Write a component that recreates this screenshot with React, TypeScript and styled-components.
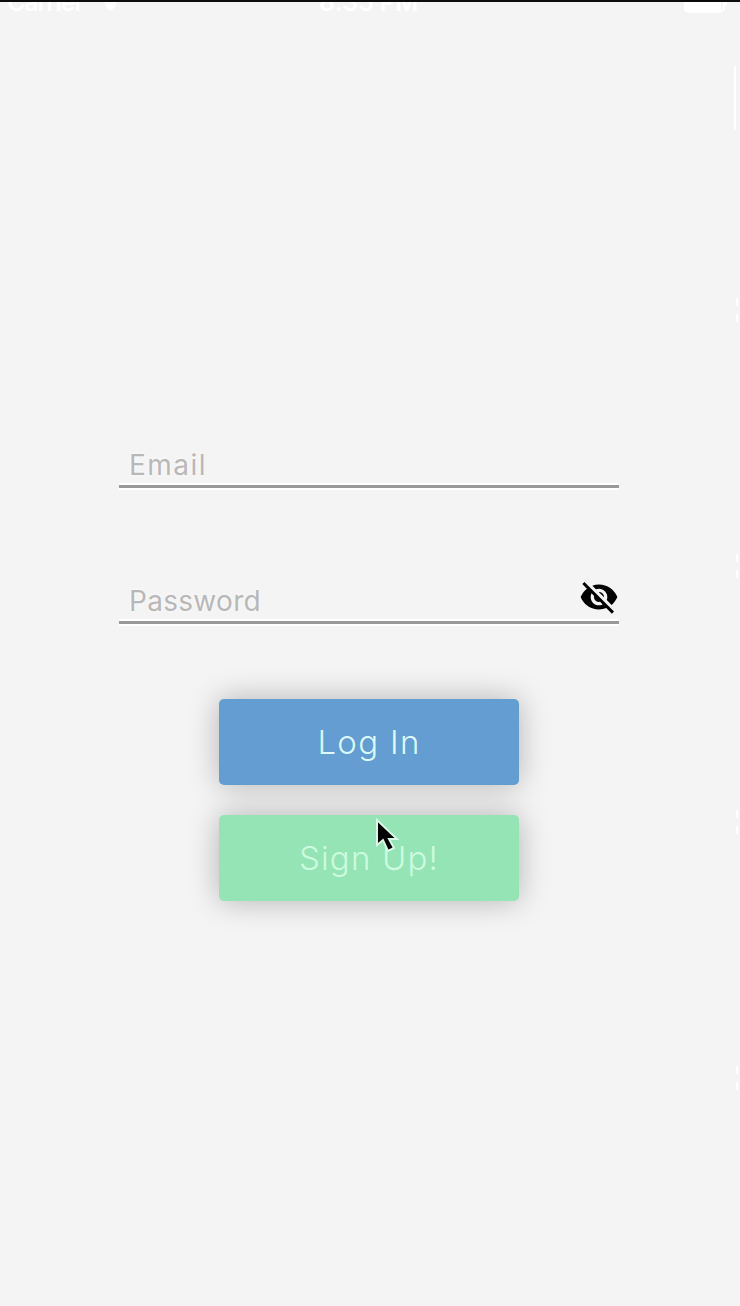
import React from "react";
import styled, { createGlobalStyle } from "styled-components";

const GlobalStyle = createGlobalStyle`
  * { box-sizing: border-box; }
  body { margin: 0; background: #f4f4f4; }
`;

const Screen = styled.main`
  position: relative;
  width: 740px;
  height: 1306px;
  display: flex;
  flex-direction: column;
  align-items: center;
  overflow: hidden;
  background: #f4f4f4;
  border-top: 2px solid #0c0c0c;
  font-family: Inter, "Liberation Sans", sans-serif;
`;

const StatusBar = styled.header`
  width: 100%;
  height: 26px;
  margin-top: -12px;
  padding: 0 13px 0 7px;
  display: grid;
  grid-template-columns: 1fr auto 1fr;
  align-items: start;
  color: #fff;
  font-size: 25px;
  font-weight: 600;
  line-height: 24px;
`;

const StatusGroup = styled.div<{ $end?: boolean }>`
  height: 24px;
  display: flex;
  align-items: center;
  gap: 17px;
  justify-content: ${(p) => (p.$end ? "flex-end" : "flex-start")};
`;

const Carrier = styled.span`
  letter-spacing: -1.2px;
`;

const Clock = styled.span`
  height: 24px;
  padding-left: 3px;
  letter-spacing: -0.3px;
`;

const Form = styled.form`
  width: 500px;
  margin: 426px 2px 0 0;
  display: flex;
  flex-direction: column;
  align-items: center;
`;

const Field = styled.label`
  width: 500px;
  height: 46px;
  margin-bottom: 90px;
  padding: 0 0 0 10px;
  display: flex;
  align-items: flex-start;
  justify-content: space-between;
  border-bottom: 3px solid #999;
  box-shadow: 0 2px 0 #fff, inset 0 -2px 0 #fff;
`;

const Placeholder = styled.span<{ $spacing: number }>`
  font-size: 28px;
  font-weight: 400;
  line-height: 47px;
  letter-spacing: ${(p) => p.$spacing}px;
  color: #b8b8b8;
  text-shadow: 0 0 3px #fff;
`;

const Visibility = styled.svg`
  width: 40px;
  height: 40px;
  margin: -1px 0 0 auto;
  overflow: visible;
`;

const Actions = styled.div`
  margin-top: -15px;
  display: flex;
  flex-direction: column;
  gap: 30px;
`;

const Button = styled.button<{ $tone: string; $ink: string; $spacing: number }>`
  width: 300px;
  height: 86px;
  padding: 0 0 1px;
  border: 0;
  border-radius: 5px;
  background: ${(p) => p.$tone};
  color: ${(p) => p.$ink};
  font-family: inherit;
  font-size: 33px;
  font-weight: 300;
  line-height: 40px;
  letter-spacing: ${(p) => p.$spacing}px;
  box-shadow: 0 0 30px rgba(0, 0, 0, 0.27);
`;

const Pointer = styled.svg`
  position: absolute;
  left: 374px;
  top: 814px;
  width: 28px;
  height: 40px;
`;

const EdgeMark = styled.div<{ $top: number; $height: number; $right?: number }>`
  position: absolute;
  right: ${(p) => p.$right ?? 2}px;
  top: ${(p) => p.$top}px;
  width: 2px;
  height: ${(p) => p.$height}px;
  background: #fff;
`;

const edgeTicks = [296, 312, 552, 568, 808, 824, 1064, 1080];

export default function App() {
  return (
    <>
      <GlobalStyle />
      <Screen>
        <StatusBar>
          <StatusGroup>
            <Carrier>Carrier</Carrier>
            <svg width="21" height="18" viewBox="0 0 21 18" fill="none" stroke="#fff" strokeWidth="3">
              <path d="M1 6Q10.500-2 20 6M5 10.500Q10.500 6 16 10.500" />
              <path d="M5 13l5.500-3 5.500 3-5.500 5z" fill="#fff" stroke="none" />
            </svg>
          </StatusGroup>
          <Clock>8:35 PM</Clock>
          <StatusGroup $end>
            <svg width="48" height="24" viewBox="0 0 48 24" fill="none">
              <rect x="6" y="2" width="39" height="20" rx="5" stroke="#fff" strokeWidth="2" />
              <rect x="5" y="3" width="37" height="19" rx="3" fill="#fff" />
              <path d="M47 10v5" stroke="#fff" strokeWidth="2" />
            </svg>
          </StatusGroup>
        </StatusBar>
        <Form>
          <Field>
            <Placeholder $spacing={1.5}>Email</Placeholder>
          </Field>
          <Field>
            <Placeholder $spacing={0.3}>Password</Placeholder>
            <Visibility viewBox="0 0 24 24" fill="#000">
              <path d="M12 7c2.760 0 5 2.240 5 5 0 .650-.130 1.260-.360 1.830l2.920 2.920c1.510-1.260 2.700-2.890 3.430-4.750-1.730-4.390-6-7.500-11-7.500-1.400 0-2.740.250-3.980.700l2.160 2.160C10.740 7.130 11.350 7 12 7zM2 4.270l2.280 2.280.460.460C3.080 8.300 1.780 10.020 1 12c1.730 4.390 6 7.500 11 7.500 1.550 0 3.030-.300 4.380-.840l.420.420L19.730 22 21 20.730 3.270 3 2 4.270zM7.530 9.800l1.550 1.550c-.050.210-.080.430-.080.650 0 1.660 1.340 3 3 3 .220 0 .440-.030.650-.080l1.550 1.550c-.670.330-1.410.530-2.200.530-2.760 0-5-2.240-5-5 0-.790.200-1.530.530-2.200zm4.310-.780l3.150 3.150.020-.160c0-1.660-1.340-3-3-3l-.170.010z" />
            </Visibility>
          </Field>
          <Actions>
            <Button type="button" $tone="#639dd1" $ink="#dcfaff" $spacing={1.3}>
              Log In
            </Button>
            <Button type="button" $tone="#94e4b5" $ink="#cdfbdf" $spacing={1.2}>
              Sign Up!
            </Button>
          </Actions>
        </Form>
        <EdgeMark $top={64} $height={64} $right={4} />
        {edgeTicks.map((top) => (
          <EdgeMark key={top} $top={top} $height={8} />
        ))}
        <Pointer viewBox="0 0 28 40">
          <path
            d="M3 4v25l6-5 5 11 6-3-5-9h8z"
            fill="#000"
            stroke="#d9f8e5"
            strokeWidth="2"
          />
        </Pointer>
      </Screen>
    </>
  );
}
